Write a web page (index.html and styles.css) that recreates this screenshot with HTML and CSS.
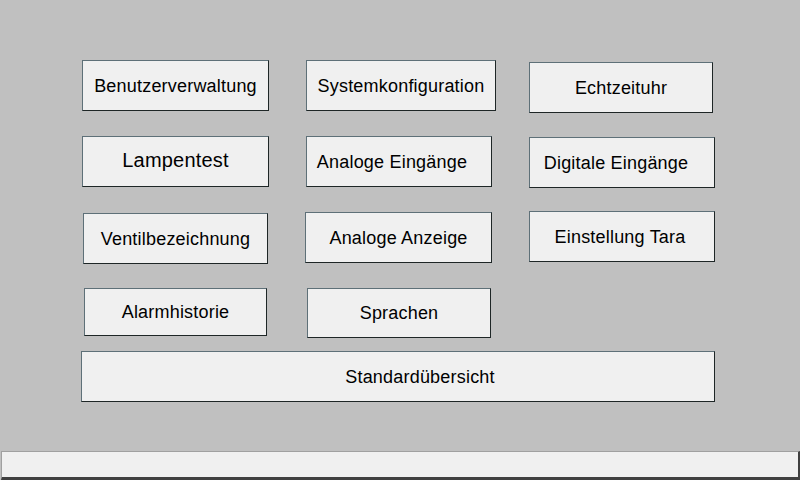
FILE: index.html
```html
<!DOCTYPE html>
<html>
<head>
    <title>Hauptmenü</title>
    <link rel="stylesheet" href="styles.css">
</head>
<body>
    <div class="menu">
        <div class="grid">
            <button class="btn btn-users">Benutzerverwaltung</button>
            <button class="btn btn-config">Systemkonfiguration</button>
            <button class="btn btn-clock">Echtzeituhr</button>

            <button class="btn btn-lamp">Lampentest</button>
            <button class="btn btn-ain">Analoge Eingänge</button>
            <button class="btn btn-din">Digitale Eingänge</button>

            <button class="btn btn-valve">Ventilbezeichnung</button>
            <button class="btn btn-adisp">Analoge Anzeige</button>
            <button class="btn btn-tara">Einstellung Tara</button>

            <button class="btn btn-alarm">Alarmhistorie</button>
            <button class="btn btn-lang">Sprachen</button>
        </div>
        <button class="btn btn-overview">Standardübersicht</button>
    </div>
    <div class="statusbar"></div>
</body>
</html>
```

FILE: styles.css
```css
html, body {
    margin: 0;
    padding: 0;
}
body {
    width: 800px;
    height: 480px;
    background-color: #c0c0c0;
    font-family: "Liberation Sans", Arial, sans-serif;
    display: flex;
    flex-direction: column;
    overflow: hidden;
}
.menu {
    flex: 1;
    padding: 60px 0 0 82px;
}
.grid {
    display: grid;
    grid-template-columns: 187px 186px 186px;
    grid-auto-rows: 51px;
    column-gap: 37px;
    row-gap: 25px;
    align-items: start;
}
.btn {
    box-sizing: border-box;
    height: 51px;
    width: 100%;
    margin: 0;
    padding: 1px 0 0 0;
    background-color: #f0f0f0;
    border: 1px solid #5e7078;
    border-right-color: #1e2626;
    border-bottom-color: #1e2626;
    border-radius: 0;
    font-family: inherit;
    font-size: 18px;
    letter-spacing: 0.2px;
    color: #000;
    text-align: center;
    cursor: pointer;
}
.btn-config {
    width: 190px;
}
.btn-clock {
    width: 184px;
    margin-top: 2px;
}
.btn-lamp {
    font-size: 20px;
    padding-bottom: 3px;
}
.btn-ain {
    padding-right: 14px;
}
.btn-din {
    margin-top: 1px;
    padding-right: 12px;
}
.btn-valve {
    width: 185px;
    margin: 1px 0 0 1px;
}
.btn-adisp {
    width: 187px;
    margin-left: -1px;
}
.btn-tara {
    margin-top: -1px;
    padding-right: 4px;
}
.btn-alarm {
    width: 183px;
    height: 48px;
    margin-left: 2px;
}
.btn-lang {
    width: 184px;
    height: 50px;
    margin-left: 1px;
}
.btn-overview {
    display: block;
    width: 634px;
    margin: 12px 0 0 -1px;
    padding-left: 44px;
}
.statusbar {
    box-sizing: border-box;
    height: 29px;
    margin-left: 1px;
    background-color: #f0f0f0;
    border-top: 1px solid #a0a0a0;
    border-left: 1px solid #a0a0a0;
    border-right: 2px solid #404040;
    border-bottom: 3px solid #404040;
}
```
